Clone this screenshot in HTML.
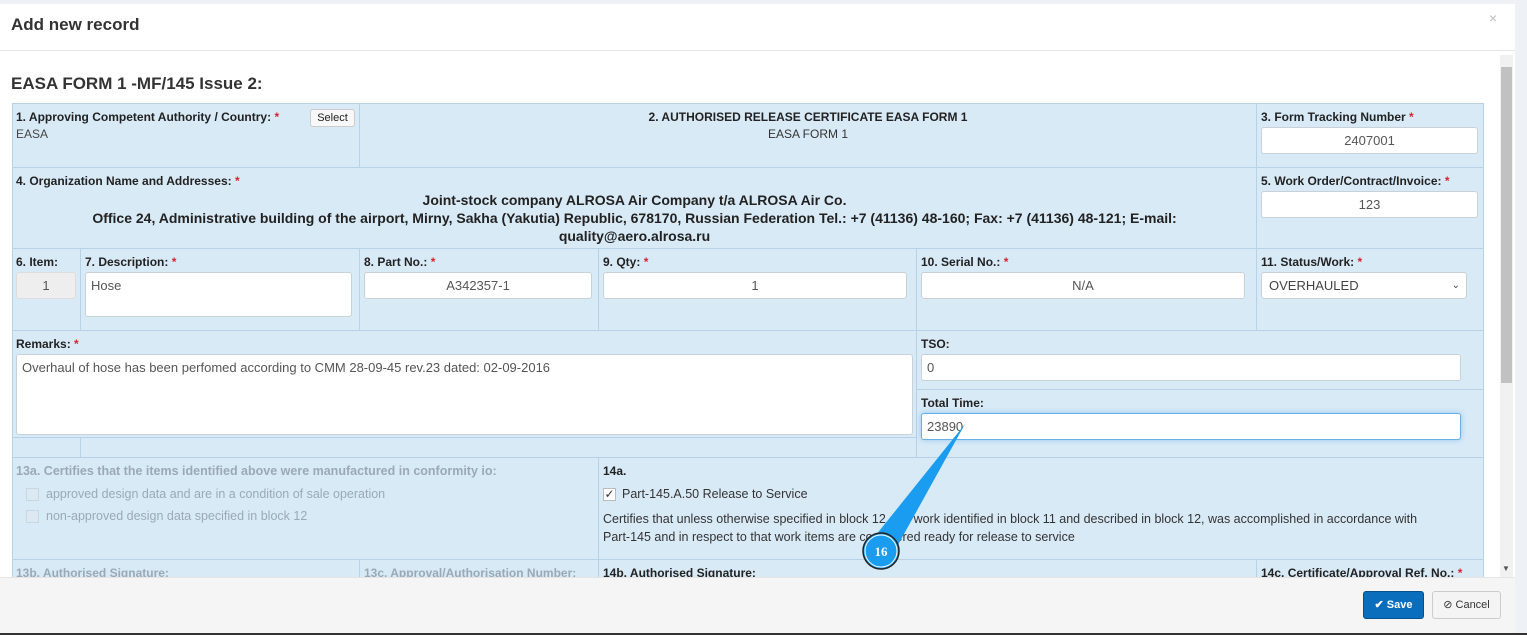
<!DOCTYPE html>
<html><head><meta charset="utf-8"><style>
*{box-sizing:border-box;margin:0;padding:0}
body{width:1527px;height:635px;overflow:hidden;background:#eef2f6;font-family:"Liberation Sans",Arial,sans-serif;font-size:12px;color:#222;position:relative}
.a{position:absolute}
.modal{left:0;top:4px;width:1515px;height:629px;background:#fff}
.c{position:absolute;background:#d9eaf7;border:1px solid #b7d2e8}
.l{position:absolute;font-weight:bold;font-size:12px;color:#222;white-space:nowrap}
.r{color:#d9232d}
.in{position:absolute;background:#fff;border:1px solid #c8d0d8;border-radius:3px;font-size:13px;color:#555;height:27px;line-height:25px}
.ctr{text-align:center}
.g{color:#9aa9b5}
</style></head><body>
<div class="a modal"></div>
<div class="a" style="left:11px;top:15px;font-size:17px;font-weight:bold;color:#333">Add new record</div>
<div class="a" style="left:1489px;top:10px;font-size:14px;color:#bbb">×</div>
<div class="a" style="left:0;top:50px;width:1515px;height:1px;background:#e5e5e5"></div>
<div class="a" style="left:1500px;top:55px;width:13px;height:522px;background:#f1f1f1"></div>
<div class="a" style="left:1501px;top:67px;width:11px;height:316px;background:#c1c1c1"></div>
<div class="a" style="left:1502px;top:564px;font-size:8px;color:#555">▼</div>
<div class="a" style="left:11px;top:74px;font-size:17px;font-weight:bold;color:#333">EASA FORM 1 -MF/145 Issue 2:</div>

<div class="c" style="left:12px;top:103px;width:348px;height:65px"></div>
<div class="c" style="left:359px;top:103px;width:898px;height:65px"></div>
<div class="c" style="left:1256px;top:103px;width:228px;height:65px"></div>
<div class="l" style="left:16px;top:110px">1. Approving Competent Authority / Country: <span class="r">*</span></div>
<div class="a" style="left:310px;top:109px;width:45px;height:18px;border:1px solid #ccc;border-radius:3px;background:#f8f8f8;font-size:11px;text-align:center;line-height:16px">Select</div>
<div class="a" style="left:16px;top:127px;color:#444">EASA</div>
<div class="l" style="left:359px;width:898px;text-align:center;top:110px">2. AUTHORISED RELEASE CERTIFICATE EASA FORM 1</div>
<div class="a" style="left:359px;width:898px;text-align:center;top:127px;color:#333">EASA FORM 1</div>
<div class="l" style="left:1261px;top:110px">3. Form Tracking Number <span class="r">*</span></div>
<div class="in ctr" style="left:1261px;top:127px;width:217px">2407001</div>

<div class="c" style="left:12px;top:167px;width:1245px;height:82px"></div>
<div class="c" style="left:1256px;top:167px;width:228px;height:82px"></div>
<div class="l" style="left:16px;top:174px">4. Organization Name and Addresses: <span class="r">*</span></div>
<div class="a" style="left:12px;width:1245px;top:191px;text-align:center;font-weight:bold;font-size:14px;line-height:18px;color:#222;padding:0 40px">Joint-stock company ALROSA Air Company t/a ALROSA Air Co.<br>Office 24, Administrative building of the airport, Mirny, Sakha (Yakutia) Republic, 678170, Russian Federation Tel.: +7 (41136) 48-160; Fax: +7 (41136) 48-121; E-mail:<br>quality@aero.alrosa.ru</div>
<div class="l" style="left:1261px;top:174px">5. Work Order/Contract/Invoice: <span class="r">*</span></div>
<div class="in ctr" style="left:1261px;top:191px;width:217px">123</div>

<div class="c" style="left:12px;top:248px;width:69px;height:83px"></div>
<div class="c" style="left:80px;top:248px;width:280px;height:83px"></div>
<div class="c" style="left:359px;top:248px;width:240px;height:83px"></div>
<div class="c" style="left:598px;top:248px;width:319px;height:83px"></div>
<div class="c" style="left:916px;top:248px;width:341px;height:83px"></div>
<div class="c" style="left:1256px;top:248px;width:228px;height:83px"></div>
<div class="l" style="left:16px;top:255px">6. Item:</div>
<div class="in ctr" style="left:16px;top:272px;width:60px;background:#eee;border-color:#ddd">1</div>
<div class="l" style="left:85px;top:255px">7. Description: <span class="r">*</span></div>
<div class="in" style="left:85px;top:272px;width:267px;height:45px;padding-left:5px">Hose</div>
<div class="l" style="left:364px;top:255px">8. Part No.: <span class="r">*</span></div>
<div class="in ctr" style="left:364px;top:272px;width:228px">A342357-1</div>
<div class="l" style="left:603px;top:255px">9. Qty: <span class="r">*</span></div>
<div class="in ctr" style="left:603px;top:272px;width:304px">1</div>
<div class="l" style="left:921px;top:255px">10. Serial No.: <span class="r">*</span></div>
<div class="in ctr" style="left:921px;top:272px;width:324px">N/A</div>
<div class="l" style="left:1261px;top:255px">11. Status/Work: <span class="r">*</span></div>
<div class="in" style="left:1261px;top:272px;width:206px;padding-left:7px;color:#444">OVERHAULED<span style="position:absolute;right:6px;font-size:10px">&#8964;</span></div>

<div class="c" style="left:12px;top:330px;width:905px;height:128px"></div>
<div class="c" style="left:916px;top:330px;width:568px;height:60px"></div>
<div class="c" style="left:916px;top:389px;width:568px;height:69px"></div>
<div class="a" style="left:12px;top:437px;width:905px;height:1px;background:#b7d2e8"></div>
<div class="a" style="left:80px;top:437px;width:1px;height:20px;background:#b7d2e8"></div>
<div class="l" style="left:16px;top:337px">Remarks: <span class="r">*</span></div>
<div class="in" style="left:16px;top:354px;width:897px;height:81px;padding-left:5px;line-height:26px">Overhaul of hose has been perfomed according to CMM 28-09-45 rev.23 dated: 02-09-2016</div>
<div class="l" style="left:921px;top:337px">TSO:</div>
<div class="in" style="left:921px;top:354px;width:540px;padding-left:5px">0</div>
<div class="l" style="left:921px;top:396px">Total Time:</div>
<div class="in" style="left:921px;top:413px;width:540px;padding-left:5px;border-color:#66afe9;box-shadow:0 0 6px rgba(102,175,233,.6)">23890</div>

<div class="c" style="left:12px;top:457px;width:587px;height:103px"></div>
<div class="c" style="left:598px;top:457px;width:886px;height:103px"></div>
<div class="l g" style="left:16px;top:464px;font-size:12.5px">13a. Certifies that the items identified above were manufactured in conformity io:</div>
<div class="a" style="left:26px;top:488px;width:13px;height:13px;border:1px solid #c7d7e4;background:#dde9f2"></div>
<div class="a g" style="left:46px;top:487px;font-size:12.5px">approved design data and are in a condition of sale operation</div>
<div class="a" style="left:26px;top:510px;width:13px;height:13px;border:1px solid #c7d7e4;background:#dde9f2"></div>
<div class="a g" style="left:46px;top:509px;font-size:12.5px">non-approved design data specified in block 12</div>
<div class="l" style="left:603px;top:464px">14a.</div>
<div class="a" style="left:603px;top:488px;width:13px;height:13px;border:1px solid #bbb;background:#fff;font-size:12px;line-height:11px;text-align:center;color:#333">✓</div>
<div class="a" style="left:622px;top:487px;font-size:12.5px;color:#333">Part-145.A.50 Release to Service</div>
<div class="a" style="left:603px;top:510px;width:835px;font-size:12.5px;line-height:18px;color:#333">Certifies that unless otherwise specified in block 12, the work identified in block 11 and described in block 12, was accomplished in accordance with <span style="white-space:nowrap">Part-145</span> and in respect to that work items are considered ready for release to service</div>

<div class="c" style="left:12px;top:559px;width:348px;height:30px"></div>
<div class="c" style="left:359px;top:559px;width:240px;height:30px"></div>
<div class="c" style="left:598px;top:559px;width:659px;height:30px"></div>
<div class="c" style="left:1256px;top:559px;width:228px;height:30px"></div>
<div class="l g" style="left:16px;top:566px">13b. Authorised Signature:</div>
<div class="l g" style="left:364px;top:566px">13c. Approval/Authorisation Number:</div>
<div class="l" style="left:603px;top:566px">14b. Authorised Signature:</div>
<div class="l" style="left:1261px;top:566px">14c. Certificate/Approval Ref. No.: <span class="r">*</span></div>

<svg class="a" style="left:0;top:0" width="1527" height="635"><polygon points="965,424 868,545 894,552" fill="#1a9cf0"/><circle cx="881" cy="551" r="18" fill="#1a9cf0" stroke="#222" stroke-width="1.5"/><circle cx="881" cy="551" r="16" fill="none" stroke="#fff" stroke-width="1"/><text x="881" y="556" text-anchor="middle" font-family="Liberation Serif" font-weight="bold" font-size="13" fill="#fff">16</text></svg>

<div class="a" style="left:0;top:577px;width:1515px;height:56px;background:#f5f5f5;border-top:1px solid #e5e5e5"></div>
<div class="a" style="left:0;top:633px;width:1527px;height:2px;background:#333"></div>
<div class="a" style="left:1363px;top:591px;width:61px;height:28px;background:#0a6ebd;border:1px solid #05508f;border-radius:3px;color:#fff;font-weight:bold;font-size:11px;text-align:center;line-height:26px">✔ Save</div>
<div class="a" style="left:1432px;top:591px;width:69px;height:28px;background:#f4f4f4;border:1px solid #ccc;border-radius:3px;color:#333;font-size:11px;text-align:center;line-height:26px">⊘ Cancel</div>
</body></html>
